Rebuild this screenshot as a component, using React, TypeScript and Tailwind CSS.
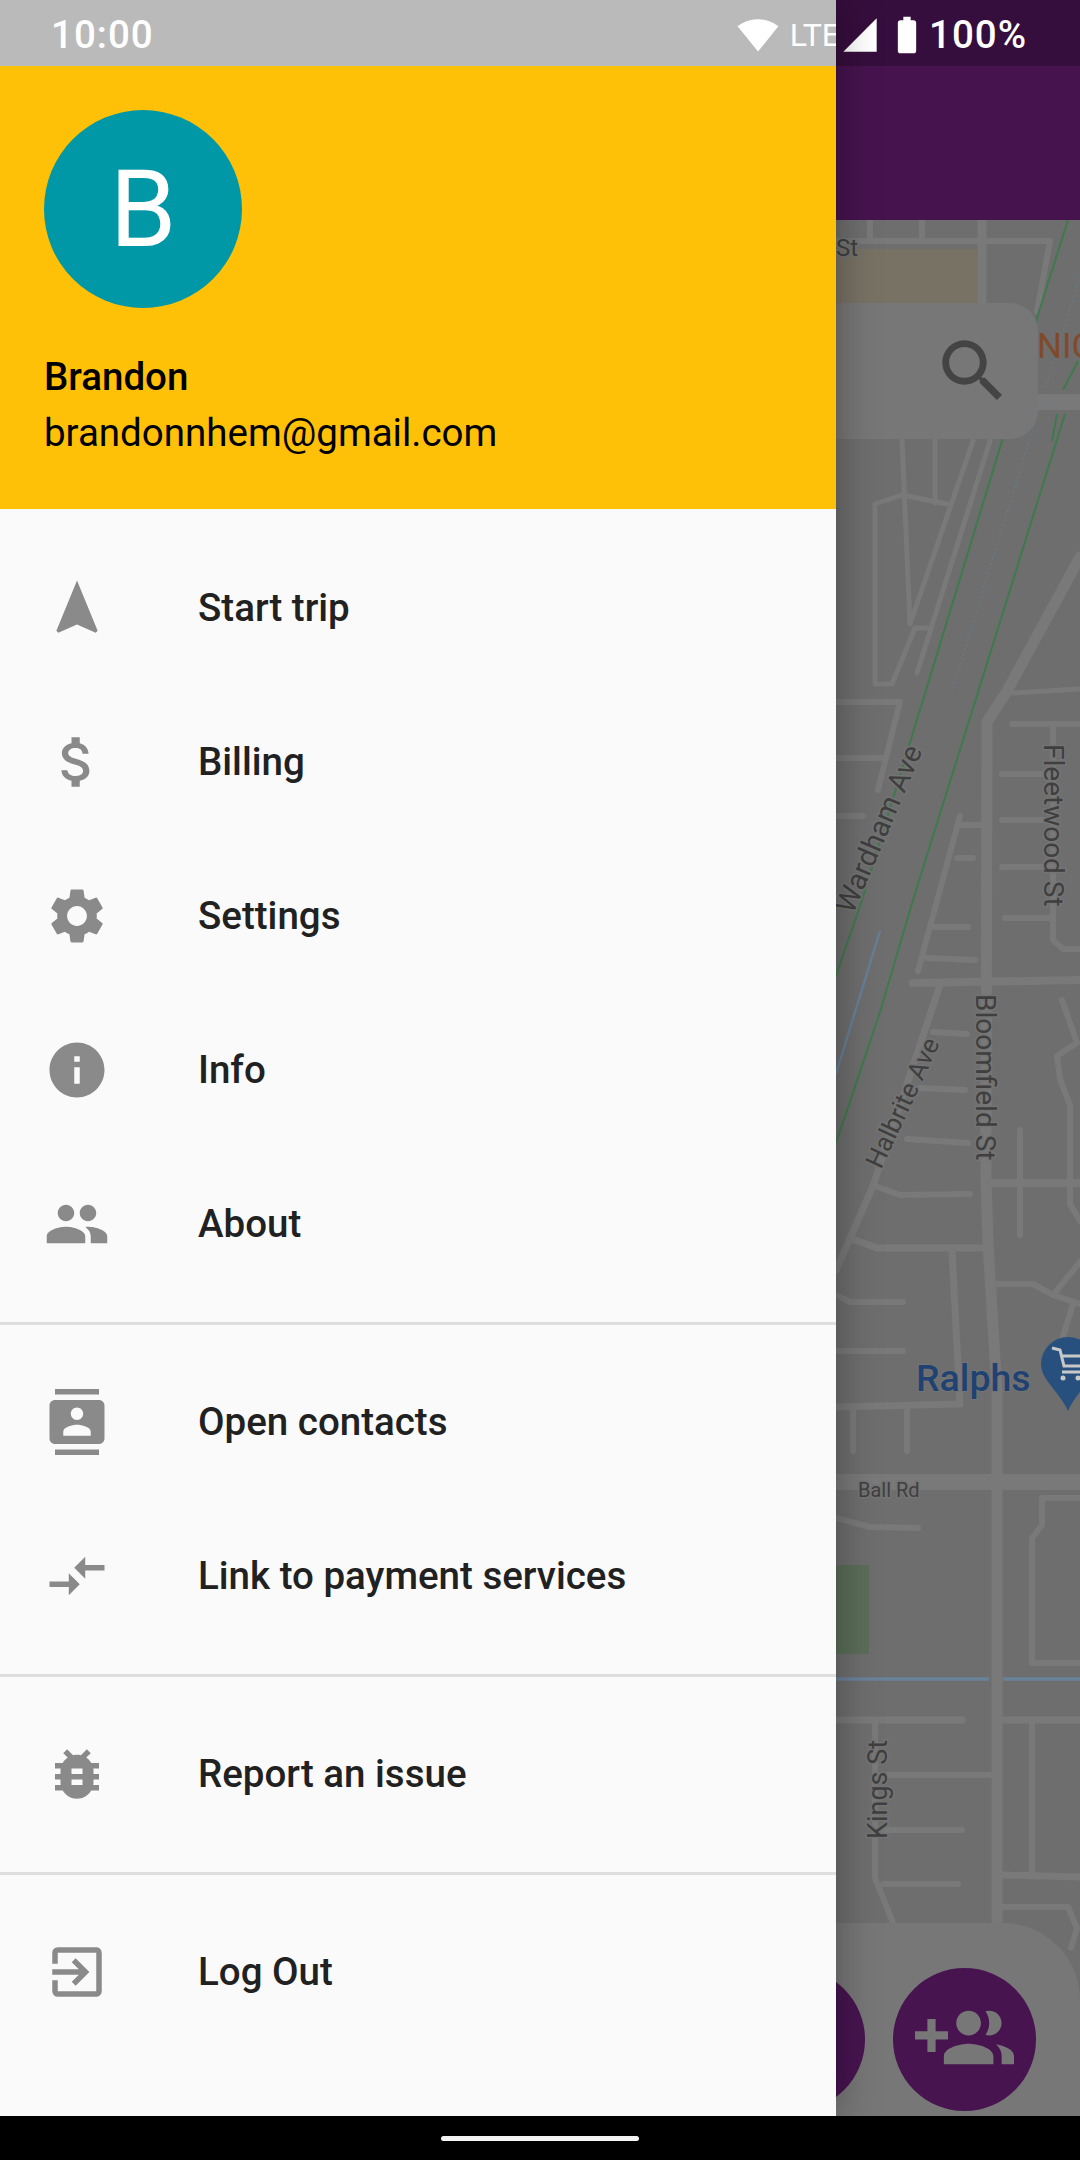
import React from "react";
import {
  MdNavigation, MdAttachMoney, MdSettings, MdInfo, MdPeople, MdContacts, MdCompareArrows,
  MdBugReport, MdExitToApp, MdSearch, MdSignalWifi4Bar, MdSignalCellular4Bar, MdBatteryFull,
} from "react-icons/md";

type Road = [number, string];
const roads: Road[] = [
  [6, "870,220 870,241"], [6, "922,220 922,241"], [9, "982,220 982,310"],
  [6, "836,241 1050,241 1037,312"], [16, "1030,402 1080,402"],
  [5, "902,440 910,624"], [5, "935,440 935,503"], [5, "973,441 910,624"], [5, "990,441 917,673"],
  [5, "875,504 902,495 947,504"], [5, "875,504 875,684 892,684 915,628 927,628"],
  [6, "836,702 900,702 878,790"], [6, "836,758 884,758"], [6, "836,816 863,816"],
  [11, "1080,557 1007,691 987,722 986,1177 988,1244 997,1391 997,1923"],
  [5, "1013,693 1080,689"], [6, "1012,724 1080,724"], [6, "1053,724 1053,940 1063,949 1080,949"],
  [6, "1002,774 1053,774"], [6, "960,816 918,971"], [6, "960,825 986,825"], [6, "957,858 973,858"],
  [6, "1002,820 1053,820"], [6, "1002,867 1053,867"], [6, "1005,918 1053,918"],
  [6, "933,927 968,927"], [6, "927,958 975,960"], [8, "913,983 1080,980"],
  [7, "940,985 873,1186 836,1270"], [6, "933,1032 967,1034"], [6, "920,1088 965,1090"],
  [6, "907,1139 968,1143"], [6, "875,1186 900,1195 970,1194"], [7, "852,1239 877,1248 982,1248"],
  [7, "952,1250 960,1404 836,1407"], [6, "1020,1130 1020,1235"], [8, "992,1183 1080,1183"],
  [6, "1062,1000 1077,1043 1057,1056 1060,1079 1070,1105 1070,1204 1080,1221"],
  [6, "997,1284 1033,1284 1053,1295 1080,1304"], [6, "1053,1295 1080,1262"], [6, "1073,1304 1060,1346"],
  [6, "836,1295 850,1302 903,1302"], [6, "836,1351 903,1351"], [6, "853,1409 853,1451"], [6, "907,1409 907,1451"],
  [16, "836,1482 1080,1482"], [6, "836,1518 870,1527 918,1528"],
  [6, "1080,1498 1042,1498 1042,1525 1032,1538 1032,1663 1080,1663"],
  [7, "1002,1720 1080,1720"], [7, "836,1720 962,1720"], [6, "875,1720 875,1878 893,1923"],
  [6, "878,1775 990,1775"], [6, "883,1830 962,1830"], [6, "883,1884 958,1884"],
  [6, "1032,1723 1032,1873"], [7, "1002,1875 1080,1877"], [6, "1002,1907 1068,1907 1077,1928 1071,1948"],
];

function MapArt() {
  const label = { fill: "#3f3f3f", stroke: "#747474", strokeWidth: 3, paintOrder: "stroke" as const, fontFamily: "Roboto, sans-serif" };
  return (
    <svg className="absolute inset-0 w-full h-full" viewBox="836 220 244 1896">
      <rect x="836" y="220" width="244" height="1896" fill="#6e6e6e" />
      <rect x="836" y="249" width="141" height="54" fill="#787265" />
      <rect x="836" y="1565" width="33" height="89" fill="#5a6e58" />
      {roads.map(([w, p], i) => (
        <polyline key={i} points={p} fill="none" stroke="#797979" strokeWidth={w} strokeLinecap="round" strokeLinejoin="round" />
      ))}
      <polyline points="1068,220 1037,318 1002,441 862,900 836,976" fill="none" stroke="#3f7a4d" strokeWidth="2" />
      <polyline points="1078,361 1063,390" fill="none" stroke="#3f7a4d" strokeWidth="2" />
      <polyline points="1065,414 913,900 880,1012 836,1143" fill="none" stroke="#3f7a4d" strokeWidth="2" />
      <polyline points="1057,414 1052,441" fill="none" stroke="#3f7a4d" strokeWidth="2" />
      <polyline points="1080,276 952,691" fill="none" stroke="#647f92" strokeWidth="1" strokeDasharray="2 3" />
      <polyline points="880,931 836,1074" fill="none" stroke="#667f95" strokeWidth="2.5" />
      <polyline points="836,1679 989,1679" fill="none" stroke="#6a8298" strokeWidth="3.5" />
      <polyline points="1003,1679 1080,1679" fill="none" stroke="#6a8298" strokeWidth="3.5" />
      <text x="836" y="256" fontSize="24" {...label}>St</text>
      <text x="1037" y="358" fontSize="35" fill="#804a2c" fontFamily="Roboto, sans-serif">NIC</text>
      <text transform="translate(853,915) rotate(-67)" fontSize="29" {...label}>Wardham Ave</text>
      <text transform="translate(1044,744) rotate(90)" fontSize="28" {...label}>Fleetwood St</text>
      <text transform="translate(881,1170) rotate(-65)" fontSize="26" {...label}>Halbrite Ave</text>
      <text transform="translate(976,994) rotate(90)" fontSize="28" {...label}>Bloomfield St</text>
      <text transform="translate(887,1839) rotate(-90)" fontSize="27" {...label}>Kings St</text>
      <text x="858" y="1497" fontSize="20" {...label}>Ball Rd</text>
      <text x="916" y="1391" fontSize="37.5" fontWeight="500" fill="#1f4272" stroke="#747474" strokeWidth="2" paintOrder="stroke" fontFamily="Roboto, sans-serif">Ralphs</text>
      <path d="M1068 1337a27 27 0 0 1 27 27c0 16-19 28-27 47c-8-19-27-31-27-47a27 27 0 0 1 27-27z" fill="#28507f" />
      <path d="M1052 1348l8 2 4 16h22M1062 1356h24l-3 8M1062 1372h24" fill="none" stroke="#c8c8c8" strokeWidth="3" />
      <circle cx="1063" cy="1378" r="2.5" fill="#c8c8c8" />
      <circle cx="1078" cy="1378" r="2.5" fill="#c8c8c8" />
    </svg>
  );
}

const Row = ({ icon: Icon, label }: { icon: React.ComponentType<{ size?: number; className?: string }>; label: string }) => (
  <div className="h-[154px] flex items-center pl-[44px]">
    <Icon size={66} className="text-[#8a8a8a] shrink-0" />
    <span className="ml-[88px] text-[38.5px] font-medium text-[#212121]">{label}</span>
  </div>
);

const Divider = () => (
  <div className="h-[44px] flex items-center">
    <div className="w-full h-[3px] bg-[#dedede]" />
  </div>
);

export default function App() {
  return (
    <div className="w-[1080px] h-[2160px] flex flex-col overflow-hidden font-['Roboto',sans-serif]">
      <div className="flex h-[2116px]">
        <div className="relative z-10 w-[836px] flex flex-col bg-[#fafafa] shadow-[0_0_40px_rgba(0,0,0,0.35)]">
          <div className="h-[66px] bg-[#bababa] flex items-center text-white overflow-hidden pt-[3px]">
            <span className="ml-[51px] text-[38.5px] font-medium tracking-[1px]">10:00</span>
            <MdSignalWifi4Bar size={42} className="ml-[583px] shrink-0" />
            <span className="ml-[11px] text-[32px] whitespace-nowrap">LTE</span>
          </div>
          <div className="h-[443px] bg-[#ffc107] pl-[44px] pt-[44px] text-black">
            <div className="w-[198px] h-[198px] rounded-full bg-[#0097a7] flex items-center justify-center text-white text-[107px] leading-none">
              B
            </div>
            <div className="mt-[47px] text-[38.5px] font-medium leading-[44px]">Brandon</div>
            <div className="mt-[12px] text-[38.5px] leading-[44px]">brandonnhem@gmail.com</div>
          </div>
          <div className="pt-[22px]">
            <Row icon={MdNavigation} label="Start trip" />
            <Row icon={MdAttachMoney} label="Billing" />
            <Row icon={MdSettings} label="Settings" />
            <Row icon={MdInfo} label="Info" />
            <Row icon={MdPeople} label="About" />
            <Divider />
            <Row icon={MdContacts} label="Open contacts" />
            <Row icon={MdCompareArrows} label="Link to payment services" />
            <Divider />
            <Row icon={MdBugReport} label="Report an issue" />
            <Divider />
            <Row icon={MdExitToApp} label="Log Out" />
          </div>
        </div>
        <div className="flex-1 flex flex-col min-w-0">
          <div className="h-[66px] bg-[#360e3d] flex items-center pl-[4px] text-white pt-[3px]">
            <MdSignalCellular4Bar size={40} className="shrink-0" />
            <MdBatteryFull size={44} className="ml-[5px] shrink-0" />
            <span className="text-[38.5px] font-medium tracking-[1px]">100%</span>
          </div>
          <div className="h-[154px] bg-[#46134f]" />
          <div className="relative flex-1 overflow-hidden">
            <MapArt />
            <div className="absolute top-[83px] left-[-40px] right-[42px] h-[136px] rounded-[28px] bg-[#777777] flex items-center justify-end pr-[24px]">
              <MdSearch size={82} className="text-[#444444]" />
            </div>
            <div className="absolute bottom-0 left-[-40px] right-0 h-[193px] rounded-tr-[77px] bg-[#777777]">
              <div className="absolute left-[-74px] top-[45px] w-[143px] h-[143px] rounded-full bg-[#471450]" />
              <div className="absolute left-[97px] top-[45px] w-[143px] h-[143px] rounded-full bg-[#471450] flex items-center justify-center">
                <svg width="99" height="99" viewBox="0 0 24 24" fill="#777777">
                  <path d="M8 10H5V7H3v3H0v2h3v3h2v-3h3v-2zm10 1c1.66 0 2.99-1.34 2.99-3S19.66 5 18 5c-.32 0-.63.05-.91.14.57.81.9 1.79.9 2.86s-.34 2.04-.9 2.86c.28.09.59.14.91.14zm-5 0c1.66 0 2.99-1.34 2.99-3S14.66 5 13 5c-1.66 0-3 1.34-3 3s1.34 3 3 3zm6.62 2.16c.83.73 1.38 1.66 1.38 2.84v2h3v-2c0-1.54-2.37-2.49-4.38-2.84zM13 13c-2 0-6 1-6 3v2h12v-2c0-2-4-3-6-3z" />
                </svg>
              </div>
            </div>
          </div>
        </div>
      </div>
      <div className="h-[44px] bg-black flex items-center justify-center">
        <div className="w-[198px] h-[5px] rounded-full bg-white" />
      </div>
    </div>
  );
}
